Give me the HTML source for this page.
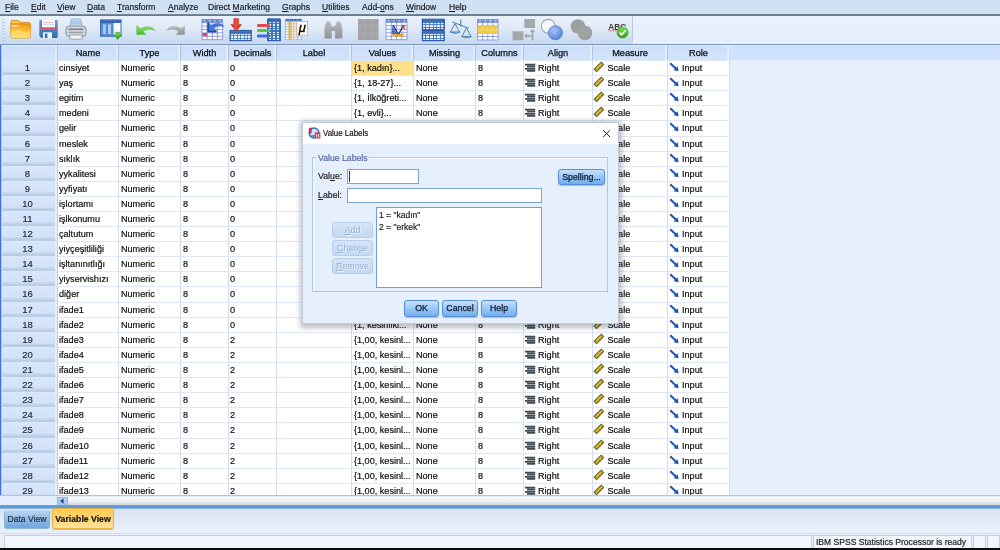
<!DOCTYPE html>
<html lang="tr"><head><meta charset="utf-8"><title>IBM SPSS Statistics Data Editor</title>
<style>
*{box-sizing:border-box;margin:0;padding:0}
html,body{width:1000px;height:550px;overflow:hidden}
body{position:relative;will-change:transform;background:#e7effc;font-family:"Liberation Sans",sans-serif;font-size:9.1px;color:#0c0c0c;-webkit-text-stroke:.18px}
.abs{position:absolute}
.menubar{position:absolute;left:0;top:0;width:1000px;height:14px;background:linear-gradient(#cfe0f5,#cfe1f0)}
.menubar span{position:absolute;top:2px;font-size:8.5px;line-height:10px;color:#1a1a1a;white-space:nowrap}
.menubar u{text-decoration:underline;text-underline-offset:1px}
.menuline{position:absolute;left:0;top:14px;width:1000px;height:2px;background:linear-gradient(#7b8d99,#5f7686)}
.toolbar{position:absolute;left:0;top:16px;width:1000px;height:28px;background:linear-gradient(#e9f1fd,#e5eefb)}
.tbin{position:absolute;left:0;top:0;width:633px;height:28px;background:linear-gradient(#e9f1fc 0%,#dfe9f7 45%,#cfdff3 80%,#c6d9f0 100%);border-right:1px solid #b9c6d8;border-bottom-right-radius:3px}
.tbline{position:absolute;left:0;top:44px;width:1000px;height:1px;background:#7f99bc}
.hdr{position:absolute;left:0;top:45px;width:1000px;height:15px;background:linear-gradient(#d9e7fc 0,#d9e7fc 1px,#cde0fb 2px,#d1e2fb 100%)}
.hc{position:absolute;top:0;height:15px;line-height:17px;padding-left:2px;text-align:center;font-size:9.2px;color:#0a0e14;-webkit-text-stroke:.25px;border-left:1px solid #b1c5e2;border-right:2px solid #e3edfc;background:linear-gradient(#dbe8fc 0,#dbe8fc 1px,#cbdefa 2px,#d2e3fb 100%)}
.grid{position:absolute;left:0;top:60px;width:730px;height:435px;background:#fff;overflow:hidden}
.row{position:absolute;left:0;width:730px}
.rn{position:absolute;left:0;top:0;width:57px;height:100%;line-height:14px;text-align:center;background:linear-gradient(#d8e6fc 0%,#d3e2f9 68%,#bccfe8 86%,#b9cce6 100%);border-top:1px solid #dbe8fb;border-right:2px solid #e6effc;color:#222c3c;font-size:9.5px}
.c{position:absolute;top:0;height:100%;line-height:15.4px;padding-left:2px;white-space:nowrap;overflow:hidden;border-left:1px solid #d3dff0;border-top:1px solid #dfe8f5}
.c1{left:57px;width:61px;padding-left:1px;border-left-color:#b9cbe6}.c2{left:118px;width:62px}.c3{left:180px;width:48px}.c4{left:228px;width:48px;padding-left:1px}.c5{left:276px;width:75px}
.c6{left:351px;width:62px}.c7{left:413px;width:62px}.c8{left:475px;width:48px}.c9{left:523px;width:69px}.c10{left:592px;width:75px}.c11{left:667px;width:63px;border-right:1px solid #d3dff0}
.sel{background:#ffe08a}
i{display:inline-block;vertical-align:top}
.hscroll{position:absolute;left:0;top:495px;width:1000px;height:10px;background:#e4edfb;border-top:1px solid #a9c6ea}
.hsbtn{position:absolute;left:57px;top:1px;width:11px;height:9px;background:linear-gradient(#bcd6f5,#9fc3ee);border:1px solid #8db4e4}
.hsbtn svg{position:absolute;left:0px;top:-1px}
.hstrack{position:absolute;left:68px;top:1px;width:932px;height:9px;background:linear-gradient(#fdfdfe,#eef0f4 45%,#cbd0d9)}
.blueline{position:absolute;left:0;top:505px;width:1000px;height:4px;background:linear-gradient(#6fa5dc,#5b98d4 40%,#5b98d4 70%,#b4cce8)}
.tabbar{position:absolute;left:0;top:509px;width:1000px;height:24px;background:linear-gradient(#d9e2ee,#e3ebf6 50%,#e9f0fb)}
.tab{position:absolute;text-align:center;font-size:8.6px;border-radius:3px;white-space:nowrap}
.tab1{left:4px;top:1px;width:46px;height:19px;line-height:17px;background:linear-gradient(#b9d4f0,#8ebae6 50%,#6ea6de);border:1px solid #8fb4dc;border-top-color:#c3d8ee;color:#1c2a3c}
.tab2{left:52px;top:-1px;width:62px;height:21px;line-height:20px;background:linear-gradient(#ffc94e,#ffd676 50%,#ffe29a);border:1px solid #e9b548;color:#15130c;font-weight:bold;font-size:8.7px;box-shadow:0 1px 1px rgba(120,110,80,.4)}
.statusbar{position:absolute;left:0;top:533px;width:1000px;height:15px;background:#e9f0fb;border-top:1px solid #d3dbe8}
.sb{position:absolute;top:1px;height:14px;border:1px solid #c4cedd;border-bottom:none;background:#f1f5fc;font-size:8.55px;line-height:12px;color:#222;white-space:nowrap}
.sb1{left:4px;width:808px}.sb2{left:813px;width:159px;padding-left:2px}.sb3{left:973px;width:13px}.sb4{left:987px;width:13px}
.blackbar{position:absolute;left:0;top:548px;width:1000px;height:2px;background:#0c0c0c}
.dlgshadow{position:absolute;left:300px;top:121px;width:322px;height:207px;border-radius:3px;background:rgba(50,60,80,.32);filter:blur(2.5px)}
.dlg{position:absolute;left:302px;top:122px;width:317px;height:202px;background:#e6effc;border:1px solid #c2cad6;font-size:8.8px;color:#1c1c1c}
.dtitle{position:absolute;left:0;top:1px;width:315px;height:21px;background:#fff}
.dtt{position:absolute;left:20px;top:5px;font-size:8.8px;line-height:12px;color:#111;transform:scaleX(.9);transform-origin:0 0;white-space:nowrap}
.gb{position:absolute;left:9px;top:35px;width:296px;height:135px;border:1px solid #b4c6dc;box-shadow:inset 1px 1px 0 #f6f9fe}
.gbt{position:absolute;left:14px;top:30px;padding:0 1px;background:#e6effc;color:#5565a5;font-size:8.7px;line-height:12px}
.lb{position:absolute;line-height:12px;color:#222}
.inp{position:absolute;background:#fff;border:1px solid #7fa4d4}
.caret{position:absolute;left:1px;top:1px;width:1px;height:11px;background:#333}
.btn{position:absolute;border:1px solid #5790d6;border-radius:3px;background:linear-gradient(#c6dffa 0%,#9ec9f6 45%,#72aef0 100%);text-align:center;line-height:15.5px;color:#0e1a2e;-webkit-text-stroke:.25px;font-size:8.8px;box-shadow:0 1px 1px rgba(80,110,160,.4)}
.btn.dis{border-color:#b9cfe9;background:linear-gradient(#d6e5f8,#c2d8f2);color:#9ab0d0;-webkit-text-stroke:0;text-shadow:1px 1px 0 #eaf2fd;box-shadow:none}
.list{position:absolute;background:#fff;border:1px solid #6fa0d8;padding:1px 0 0 2px}
.li{line-height:12.2px;color:#1c1c1c;white-space:nowrap;font-size:8.5px}
.ic{position:absolute;top:3px}
.c9 .ic{left:0px;top:2px}.c10 .ic{left:0px;top:0px}.c11 .ic{left:1px;top:1px}
.t9{position:absolute;left:14px}.t10{position:absolute;left:14.5px}.t11{position:absolute;left:14px}
.leftline{position:absolute;left:0;top:45px;width:2px;height:463px;background:linear-gradient(90deg,#3f74c4 0,#3f74c4 1px,#b4cbee 1px,#b4cbee 2px)}
.dlgin{position:absolute;left:0;top:-1px;width:315px;height:202px}
.grip{position:absolute;left:2px;top:3px;width:3px;height:22px;background:repeating-linear-gradient(#b4c4da 0,#b4c4da 1px,transparent 1px,transparent 3px);opacity:.8}

</style></head>
<body>
<div class="menubar">
<span style="left:5px"><u>F</u>ile</span>
<span style="left:31px"><u>E</u>dit</span>
<span style="left:57px"><u>V</u>iew</span>
<span style="left:87px"><u>D</u>ata</span>
<span style="left:117px"><u>T</u>ransform</span>
<span style="left:168px"><u>A</u>nalyze</span>
<span style="left:208px">Direct <u>M</u>arketing</span>
<span style="left:282px"><u>G</u>raphs</span>
<span style="left:322px"><u>U</u>tilities</span>
<span style="left:362px">Add-<u>o</u>ns</span>
<span style="left:406px"><u>W</u>indow</span>
<span style="left:449px"><u>H</u>elp</span>
</div>
<div class="menuline"></div>
<div class="toolbar"><div class="tbin"><div class="grip"></div></div></div>
<div class="tbline"></div>
<svg class="abs" style="left:0;top:16px" width="632" height="28" viewBox="0 16 632 28">
<defs>
<linearGradient id="gFold" x1=".6" y1="0" x2=".4" y2="1"><stop offset="0" stop-color="#ff9e1c"/><stop offset=".5" stop-color="#ffbd3e"/><stop offset="1" stop-color="#ffe26e"/></linearGradient>
<linearGradient id="gBlue" x1="0" y1="0" x2="0" y2="1"><stop offset="0" stop-color="#6298cc"/><stop offset="1" stop-color="#3a6eaa"/></linearGradient>
<linearGradient id="gHdr" x1="0" y1="0" x2="0" y2="1"><stop offset="0" stop-color="#5484c8"/><stop offset="1" stop-color="#2a58a6"/></linearGradient>
<linearGradient id="gGrey" x1="0" y1="0" x2="0" y2="1"><stop offset="0" stop-color="#b9bcc0"/><stop offset="1" stop-color="#8f9397"/></linearGradient>
<linearGradient id="gGreen" x1="0" y1="0" x2="0" y2="1"><stop offset="0" stop-color="#7fe04a"/><stop offset="1" stop-color="#2f9e1c"/></linearGradient>
<linearGradient id="gGreenL" x1="0" y1="0" x2="0" y2="1"><stop offset="0" stop-color="#8fe860"/><stop offset="1" stop-color="#48b82c"/></linearGradient>
<linearGradient id="gRed" x1="0" y1="0" x2="1" y2="0"><stop offset="0" stop-color="#c62a18"/><stop offset=".5" stop-color="#f0523a"/><stop offset="1" stop-color="#b82414"/></linearGradient>
<radialGradient id="gBall" cx=".4" cy=".35" r=".7"><stop offset="0" stop-color="#a9c6f7"/><stop offset="1" stop-color="#4477d6"/></radialGradient>
</defs>
<path d="M10.800 22.300q0-2 2-2h5.400l2 2h8.200q2 0 2 2v4h-19.600z" fill="#f09a1a" stroke="#c9821a" stroke-width=".5"/>
<path d="M12 21.300h5.800l1.600 1.600h-7.400z" fill="#ffd24a"/>
<path d="M11.800 25.300h17.600v4h-17.600z" fill="#fff3d6"/>
<path d="M10.200 27.200q6 .6 10-1.200t10.800-1.200l-.7 11.700q-.1 1.700-1.800 1.700h-15.800q-1.700 0-1.800-1.700z" fill="url(#gFold)" stroke="#d08c1e" stroke-width=".6"/>
<path d="M11 32q7-3.500 11-1.500t8 .5l-.3 5.500q-.1 1.200-1.400 1.200h-15.400q-1.300 0-1.400-1.200z" fill="#ffe678" opacity=".55"/>
<path d="M39.300 21q0-1 1-1h16.400q1 0 1 1v16q0 1-1 1h-15.400l-2-2z" fill="url(#gBlue)"/>
<rect x="42" y="20" width="13" height="8" fill="#f6f8fc"/>
<rect x="40.300" y="27.300" width="16.400" height="2.300" fill="#e2506c"/>
<rect x="43" y="22" width="11" height=".7" fill="#e6a0b0"/>
<rect x="43" y="24.300" width="11" height=".7" fill="#b9d3c8"/>
<rect x="43" y="32.300" width="9" height="5.700" fill="#f1f4fa"/>
<rect x="44.800" y="33.600" width="2.700" height="4.400" fill="#3f70b0"/>
<path d="M69.800 27l1.400-7q.3-1 1.300-1h7q1 0 1.300 1l1.400 7z" fill="#cfe4fa" stroke="#7d98b8" stroke-width=".7"/>
<path d="M71.500 20.500h9l.8 4h-10.600z" fill="#9cc6f0" opacity=".8"/>
<rect x="66" y="26" width="20" height="10.500" rx="3.500" fill="#d6d9de" stroke="#80868f" stroke-width=".9"/>
<rect x="68.500" y="28.400" width="15" height="1.700" fill="#7f858e"/>
<rect x="68.500" y="31.700" width="15" height="1.500" fill="#9aa0a9"/>
<path d="M69.500 35h13l-.8 4.200h-11.400z" fill="#f4f6fa" stroke="#80868f" stroke-width=".7"/>
<rect x="100" y="19.500" width="21.500" height="17.300" fill="#3a70bc"/>
<rect x="100" y="19.500" width="21.500" height="2.800" fill="url(#gHdr)"/>
<rect x="101.300" y="23" width="11.500" height="12.500" fill="#5e96dc"/>
<rect x="102.500" y="24" width="3.600" height="10.500" fill="#a9cdf6" stroke="#3a70bc" stroke-width=".5"/>
<rect x="107.700" y="24" width="3.600" height="10.500" fill="#a9cdf6" stroke="#3a70bc" stroke-width=".5"/>
<rect x="113.500" y="23" width="7" height="12.500" fill="#f7f9fd"/>
<path d="M115.700 32.300h4v2.500h2.200l-4.200 4.600l-4.200-4.600h2.200z" fill="url(#gGreen)" stroke="#2b8a1e" stroke-width=".5"/>
<path d="M136.800 25.500v9h9l-3-3q4.500-3.600 12.300-1.300q-5.500-6.200-14.800-1.400z" fill="url(#gGreenL)" stroke="#4cba34" stroke-width=".5"/>
<path d="M184.500 26v8.500h-8.500l2.800-2.800q-4.500-4-12.300-1.500q5.500-6.500 14.800-1.400z" fill="url(#gGrey)" stroke="#9da1a6" stroke-width=".5"/>
<rect x="202" y="19.2" width="20.6" height="20.5" fill="#fff"/>
<rect x="202" y="19.2" width="20.6" height="3.4" fill="#4a74c4"/>
<rect x="203.29" y="20.22" width="2.57" height="1.36" fill="#b9d0f4"/>
<rect x="208.44" y="20.22" width="2.57" height="1.36" fill="#b9d0f4"/>
<rect x="213.59" y="20.22" width="2.57" height="1.36" fill="#b9d0f4"/>
<rect x="218.74" y="20.22" width="2.57" height="1.36" fill="#b9d0f4"/>
<path d="M202 19.2V39.7M207.15 19.2V39.7M212.3 19.2V39.7M217.45 19.2V39.7M222.6 19.2V39.7M202 22.6H222.6M202 26.02H222.6M202 29.44H222.6M202 32.86H222.6M202 36.28H222.6M202 39.7H222.6" stroke="#8593d6" stroke-width="0.9" fill="none"/>
<rect x="202.400" y="33" width="4.700" height="3.200" fill="#e0456a"/>
<path d="M207.300 22.600h1.800v8.200h7.500v1.800h-9.300z" fill="#1f3f9a"/>
<path d="M208.800 22.600v8.400h7.800l-2.500-2.700q3.800-3.700 10-1.800q-5-6-13.200-1z" fill="#3f7ad8" stroke="#2b58ac" stroke-width=".4"/>
<rect x="230" y="30.4" width="21" height="10.3" fill="#e8f3ff"/>
<rect x="230" y="30.4" width="21" height="3.2" fill="url(#gHdr)"/>
<path d="M230 30.4V40.7M233.5 30.4V40.7M237 30.4V40.7M240.5 30.4V40.7M244 30.4V40.7M247.5 30.4V40.7M251 30.4V40.7M230 33.6H251M230 35.97H251M230 38.33H251M230 40.7H251" stroke="#4378c4" stroke-width="0.8" fill="none" shape-rendering="crispEdges"/>
<rect x="230" y="30.4" width="21" height="10.3" fill="none" stroke="#2a56a4" stroke-width="1"/>
<path d="M233.800 18.600h4.800v5.800h3l-5.400 7l-5.400-7h3z" fill="url(#gRed)" stroke="#a82414" stroke-width=".4"/>
<rect x="268" y="18.9" width="12" height="21.8" fill="#e8f3ff"/>
<rect x="268" y="18.9" width="12" height="2.4" fill="#2b5cb0"/>
<path d="M268 18.9V40.7M272 18.9V40.7M276 18.9V40.7M280 18.9V40.7M268 21.3H280M268 23.72H280M268 26.15H280M268 28.57H280M268 31H280M268 33.42H280M268 35.85H280M268 38.28H280M268 40.7H280" stroke="#3f74c2" stroke-width="1.1" fill="none" shape-rendering="crispEdges"/>
<rect x="268" y="18.9" width="12" height="21.8" fill="none" stroke="#2b5cb0" stroke-width="1"/>
<rect x="257" y="24" width="13" height="3" rx="1.300" fill="#e04a50"/>
<rect x="257" y="28.900" width="13" height="3.100" rx="1.300" fill="#52c83e"/>
<rect x="257" y="34.500" width="13" height="3" rx="1.300" fill="#3f6fd0"/>
<rect x="285.4" y="18.9" width="16.3" height="20.8" fill="#fff"/>
<rect x="285.4" y="18.9" width="16.3" height="2.4" fill="#3f6cbc"/>
<path d="M285.4 18.9V39.7M289.47 18.9V39.7M293.55 18.9V39.7M297.62 18.9V39.7M301.7 18.9V39.7M285.4 21.3H301.7M285.4 23.93H301.7M285.4 26.56H301.7M285.4 29.19H301.7M285.4 31.81H301.7M285.4 34.44H301.7M285.4 37.07H301.7M285.4 39.7H301.7" stroke="#8fa6dc" stroke-width="0.8" fill="none"/>
<rect x="288.300" y="21.600" width="3.600" height="18" fill="#dcb84e" opacity=".85"/>
<rect x="293" y="21.600" width="3.200" height="18" fill="#f0dc9a" opacity=".55"/>
<rect x="296.600" y="21.400" width="11" height="13.800" fill="#fffaf5" stroke="#eaa27e" stroke-width=".8"/>
<text x="302.200" y="32" font-family="Liberation Sans,sans-serif" font-size="13" font-style="italic" text-anchor="middle" fill="#000" stroke="#000" stroke-width=".35">μ</text>
<path d="M326.500 21.500h4v2l1.200 2v13h-7.200v-11z M340.300 21.500h-4v2l-1.200 2v13h7.200v-11z" fill="url(#gGrey)"/>
<rect x="331" y="26.500" width="5" height="4.500" fill="#a3a6aa"/>
<rect x="358" y="19" width="20.500" height="21" fill="#a3a4a5"/>
<path d="M358 26h20.500M358 33h20.500M365 19v21M372 19v21" stroke="#adaeaf" stroke-width=".8"/>
<rect x="386" y="18.9" width="21" height="20.8" fill="#fff"/>
<rect x="386" y="18.9" width="21" height="3.4" fill="#4a74c4"/>
<rect x="387.31" y="19.92" width="2.62" height="1.36" fill="#b9d0f4"/>
<rect x="392.56" y="19.92" width="2.62" height="1.36" fill="#b9d0f4"/>
<rect x="397.81" y="19.92" width="2.62" height="1.36" fill="#b9d0f4"/>
<rect x="403.06" y="19.92" width="2.62" height="1.36" fill="#b9d0f4"/>
<path d="M386 18.9V39.7M391.25 18.9V39.7M396.5 18.9V39.7M401.75 18.9V39.7M407 18.9V39.7M386 22.3H407M386 25.78H407M386 29.26H407M386 32.74H407M386 36.22H407M386 39.7H407" stroke="#8593d6" stroke-width="0.9" fill="none"/>
<path d="M392.500 25.500l4.800 8.500h-5.800z" fill="#4a70d0"/>
<path d="M393 25l5.500 9.500M403.500 25l-5 9.500" stroke="#26348a" stroke-width="1.300"/>
<path d="M391.500 34h13l-2 2.400h-9z" fill="#e8a825"/>
<path d="M402.300 26.500l2.600-2l-.3 6z" fill="#d8503a"/>
<rect x="422.3" y="19.2" width="21.7" height="10.6" fill="#e8f3ff"/>
<rect x="422.3" y="19.2" width="21.7" height="3.3" fill="url(#gHdr)"/>
<path d="M422.3 19.2V29.8M425.92 19.2V29.8M429.53 19.2V29.8M433.15 19.2V29.8M436.77 19.2V29.8M440.38 19.2V29.8M444 19.2V29.8M422.3 22.5H444M422.3 24.93H444M422.3 27.37H444M422.3 29.8H444" stroke="#4378c4" stroke-width="0.9" fill="none" shape-rendering="crispEdges"/>
<rect x="422.3" y="31" width="21.7" height="9.7" fill="#e8f3ff"/>
<rect x="422.3" y="31" width="21.7" height="2.5" fill="url(#gHdr)"/>
<path d="M422.3 31V40.7M425.92 31V40.7M429.53 31V40.7M433.15 31V40.7M436.77 31V40.7M440.38 31V40.7M444 31V40.7M422.3 33.5H444M422.3 35.9H444M422.3 38.3H444M422.3 40.7H444" stroke="#4378c4" stroke-width="0.9" fill="none" shape-rendering="crispEdges"/>
<rect x="422.300" y="19.200" width="21.700" height="21.500" fill="none" stroke="#2a56a4" stroke-width="1"/><rect x="422.300" y="29.500" width="21.700" height="1.800" fill="#2a56a4"/>
<path d="M452.500 22l16 6.200" stroke="#5b87b5" stroke-width="1.200"/>
<path d="M460.800 19.500v7" stroke="#5b87b5" stroke-width="1.200"/>
<path d="M455 23.500l-4.600 8.700h9.200z" fill="none" stroke="#5b87b5" stroke-width="1"/>
<path d="M450 32h10q-5 3-10 0z" fill="#7eaad6" stroke="#4d7cab" stroke-width=".6"/>
<path d="M466.500 28l-4.600 8.700h9.200z" fill="none" stroke="#5b87b5" stroke-width="1"/>
<path d="M461.500 36.500h10q-5 3-10 0z" fill="#7eaad6" stroke="#4d7cab" stroke-width=".6"/>
<rect x="477.5" y="19.2" width="20.5" height="20.8" fill="#fff"/>
<rect x="477.5" y="19.2" width="20.5" height="3.3" fill="#5a80c8"/>
<rect x="478.78" y="20.19" width="2.56" height="1.32" fill="#c4d6f4"/>
<rect x="483.91" y="20.19" width="2.56" height="1.32" fill="#c4d6f4"/>
<rect x="489.03" y="20.19" width="2.56" height="1.32" fill="#c4d6f4"/>
<rect x="494.16" y="20.19" width="2.56" height="1.32" fill="#c4d6f4"/>
<path d="M477.5 19.2V40M482.62 19.2V40M487.75 19.2V40M492.88 19.2V40M498 19.2V40M477.5 22.5H498M477.5 26H498M477.5 29.5H498M477.5 33H498M477.5 36.5H498M477.5 40H498" stroke="#8593d6" stroke-width="0.9" fill="none"/>
<rect x="477.500" y="26" width="20.500" height="7.600" fill="#f0c636" opacity=".92"/>
<path d="M482.600 26v7.600M487.700 26v7.600M492.800 26v7.600M477.500 29.800h20.500" stroke="#f8e28e" stroke-width=".7"/>
<rect x="524.300" y="19" width="10.700" height="9" fill="#a6a7a8"/>
<rect x="512.600" y="31.300" width="10.700" height="9" fill="#a6a7a8"/>
<path d="M525 35.800h6M532.500 30v10.500" stroke="#a6a7a8" stroke-width="1.800"/>
<path d="M524 35.800l3-2.600v5.200zM532.500 29l-2.600 3h5.200z" fill="#a6a7a8"/>
<circle cx="548.300" cy="26.300" r="7" fill="#f4f7fc" stroke="#b0b4ba" stroke-width="1.200"/>
<circle cx="555.400" cy="32.800" r="7.100" fill="url(#gBall)" stroke="#4a78d0" stroke-width=".8" opacity=".92"/>
<circle cx="548.300" cy="26.300" r="7" fill="none" stroke="#9aa0aa" stroke-width=".9" opacity=".55"/>
<circle cx="578" cy="26.500" r="7.300" fill="#9d9e9f"/>
<circle cx="585" cy="33" r="7.300" fill="#a1a2a3"/>
<text x="608.300" y="29.500" font-family="Liberation Sans,sans-serif" font-size="9.300" font-weight="bold" fill="#3a3a3a" textLength="18" lengthAdjust="spacingAndGlyphs">ABC</text>
<path d="M608.500 30.800h9" stroke="#e03030" stroke-width=".8" stroke-dasharray="1 .6"/>
<circle cx="622.500" cy="32.500" r="5.600" fill="url(#gGreen)" stroke="#2b8a1e" stroke-width=".5"/>
<path d="M619.500 32.500l2.200 2.300l3.900-4.400" fill="none" stroke="#fff" stroke-width="1.600"/>
</svg>
<svg width="0" height="0" style="position:absolute"><defs>
<symbol id="iAl" viewBox="0 0 12 10"><path d="M1 1.600h10.200M3 3.700h8.200M1 5.800h10.200M3 7.900h8.200" stroke="#3f4852" stroke-width="1.750"/></symbol>
<symbol id="iSc" viewBox="0 0 12 11"><path d="M1.200 8.200L8.200 1.200L10.600 3.600L3.600 10.600z" fill="#e0c040" stroke="#6a5c18" stroke-width="1.100"/><path d="M4 7.600l1.100 1.100M5.900 5.700l1.100 1.100M7.800 3.800l1.100 1.100" stroke="#5a4e14" stroke-width=".8"/></symbol>
<symbol id="iIn" viewBox="0 0 11 10"><path d="M1.200 1.200L7.400 7" stroke="#1a55b8" stroke-width="2"/><path d="M9.600 9.200L4.600 8.200L8.600 4.300z" fill="#1a55b8"/></symbol>
</defs></svg>
<div class="hdr">
<div class="hc" style="left:0px;width:57px"></div>
<div class="hc" style="left:57px;width:61px">Name</div>
<div class="hc" style="left:118px;width:62px">Type</div>
<div class="hc" style="left:180px;width:48px">Width</div>
<div class="hc" style="left:228px;width:48px">Decimals</div>
<div class="hc" style="left:276px;width:75px">Label</div>
<div class="hc" style="left:351px;width:62px">Values</div>
<div class="hc" style="left:413px;width:62px">Missing</div>
<div class="hc" style="left:475px;width:48px">Columns</div>
<div class="hc" style="left:523px;width:69px">Align</div>
<div class="hc" style="left:592px;width:75px">Measure</div>
<div class="hc" style="left:667px;width:62px">Role</div>
</div>
<div class="grid">
<div class="row" style="top:0px;height:15px"><div class="rn">1</div><div class="c c1">cinsiyet</div><div class="c c2">Numeric</div><div class="c c3">8</div><div class="c c4">0</div><div class="c c5"></div><div class="c c6 sel">{1, kadın}...</div><div class="c c7">None</div><div class="c c8">8</div><div class="c c9"><svg class="ic" width="12" height="10"><use href="#iAl"/></svg><span class="t9">Right</span></div><div class="c c10"><svg class="ic" width="12" height="11"><use href="#iSc"/></svg><span class="t10">Scale</span></div><div class="c c11"><svg class="ic" width="11" height="10"><use href="#iIn"/></svg><span class="t11">Input</span></div></div>
<div class="row" style="top:15px;height:15px"><div class="rn">2</div><div class="c c1">yaş</div><div class="c c2">Numeric</div><div class="c c3">8</div><div class="c c4">0</div><div class="c c5"></div><div class="c c6">{1, 18-27}...</div><div class="c c7">None</div><div class="c c8">8</div><div class="c c9"><svg class="ic" width="12" height="10"><use href="#iAl"/></svg><span class="t9">Right</span></div><div class="c c10"><svg class="ic" width="12" height="11"><use href="#iSc"/></svg><span class="t10">Scale</span></div><div class="c c11"><svg class="ic" width="11" height="10"><use href="#iIn"/></svg><span class="t11">Input</span></div></div>
<div class="row" style="top:30px;height:15px"><div class="rn">3</div><div class="c c1">egitim</div><div class="c c2">Numeric</div><div class="c c3">8</div><div class="c c4">0</div><div class="c c5"></div><div class="c c6">{1, İlköğreti...</div><div class="c c7">None</div><div class="c c8">8</div><div class="c c9"><svg class="ic" width="12" height="10"><use href="#iAl"/></svg><span class="t9">Right</span></div><div class="c c10"><svg class="ic" width="12" height="11"><use href="#iSc"/></svg><span class="t10">Scale</span></div><div class="c c11"><svg class="ic" width="11" height="10"><use href="#iIn"/></svg><span class="t11">Input</span></div></div>
<div class="row" style="top:45px;height:15px"><div class="rn">4</div><div class="c c1">medeni</div><div class="c c2">Numeric</div><div class="c c3">8</div><div class="c c4">0</div><div class="c c5"></div><div class="c c6">{1, evli}...</div><div class="c c7">None</div><div class="c c8">8</div><div class="c c9"><svg class="ic" width="12" height="10"><use href="#iAl"/></svg><span class="t9">Right</span></div><div class="c c10"><svg class="ic" width="12" height="11"><use href="#iSc"/></svg><span class="t10">Scale</span></div><div class="c c11"><svg class="ic" width="11" height="10"><use href="#iIn"/></svg><span class="t11">Input</span></div></div>
<div class="row" style="top:60px;height:16px"><div class="rn">5</div><div class="c c1">gelir</div><div class="c c2">Numeric</div><div class="c c3">8</div><div class="c c4">0</div><div class="c c5"></div><div class="c c6"></div><div class="c c7">None</div><div class="c c8">8</div><div class="c c9"><svg class="ic" width="12" height="10"><use href="#iAl"/></svg><span class="t9">Right</span></div><div class="c c10"><svg class="ic" width="12" height="11"><use href="#iSc"/></svg><span class="t10">Scale</span></div><div class="c c11"><svg class="ic" width="11" height="10"><use href="#iIn"/></svg><span class="t11">Input</span></div></div>
<div class="row" style="top:76px;height:15px"><div class="rn">6</div><div class="c c1">meslek</div><div class="c c2">Numeric</div><div class="c c3">8</div><div class="c c4">0</div><div class="c c5"></div><div class="c c6"></div><div class="c c7">None</div><div class="c c8">8</div><div class="c c9"><svg class="ic" width="12" height="10"><use href="#iAl"/></svg><span class="t9">Right</span></div><div class="c c10"><svg class="ic" width="12" height="11"><use href="#iSc"/></svg><span class="t10">Scale</span></div><div class="c c11"><svg class="ic" width="11" height="10"><use href="#iIn"/></svg><span class="t11">Input</span></div></div>
<div class="row" style="top:91px;height:15px"><div class="rn">7</div><div class="c c1">sıklık</div><div class="c c2">Numeric</div><div class="c c3">8</div><div class="c c4">0</div><div class="c c5"></div><div class="c c6"></div><div class="c c7">None</div><div class="c c8">8</div><div class="c c9"><svg class="ic" width="12" height="10"><use href="#iAl"/></svg><span class="t9">Right</span></div><div class="c c10"><svg class="ic" width="12" height="11"><use href="#iSc"/></svg><span class="t10">Scale</span></div><div class="c c11"><svg class="ic" width="11" height="10"><use href="#iIn"/></svg><span class="t11">Input</span></div></div>
<div class="row" style="top:106px;height:15px"><div class="rn">8</div><div class="c c1">yykalitesi</div><div class="c c2">Numeric</div><div class="c c3">8</div><div class="c c4">0</div><div class="c c5"></div><div class="c c6"></div><div class="c c7">None</div><div class="c c8">8</div><div class="c c9"><svg class="ic" width="12" height="10"><use href="#iAl"/></svg><span class="t9">Right</span></div><div class="c c10"><svg class="ic" width="12" height="11"><use href="#iSc"/></svg><span class="t10">Scale</span></div><div class="c c11"><svg class="ic" width="11" height="10"><use href="#iIn"/></svg><span class="t11">Input</span></div></div>
<div class="row" style="top:121px;height:15px"><div class="rn">9</div><div class="c c1">yyfiyatı</div><div class="c c2">Numeric</div><div class="c c3">8</div><div class="c c4">0</div><div class="c c5"></div><div class="c c6"></div><div class="c c7">None</div><div class="c c8">8</div><div class="c c9"><svg class="ic" width="12" height="10"><use href="#iAl"/></svg><span class="t9">Right</span></div><div class="c c10"><svg class="ic" width="12" height="11"><use href="#iSc"/></svg><span class="t10">Scale</span></div><div class="c c11"><svg class="ic" width="11" height="10"><use href="#iIn"/></svg><span class="t11">Input</span></div></div>
<div class="row" style="top:136px;height:15px"><div class="rn">10</div><div class="c c1">işlortamı</div><div class="c c2">Numeric</div><div class="c c3">8</div><div class="c c4">0</div><div class="c c5"></div><div class="c c6"></div><div class="c c7">None</div><div class="c c8">8</div><div class="c c9"><svg class="ic" width="12" height="10"><use href="#iAl"/></svg><span class="t9">Right</span></div><div class="c c10"><svg class="ic" width="12" height="11"><use href="#iSc"/></svg><span class="t10">Scale</span></div><div class="c c11"><svg class="ic" width="11" height="10"><use href="#iIn"/></svg><span class="t11">Input</span></div></div>
<div class="row" style="top:151px;height:15px"><div class="rn">11</div><div class="c c1">işlkonumu</div><div class="c c2">Numeric</div><div class="c c3">8</div><div class="c c4">0</div><div class="c c5"></div><div class="c c6"></div><div class="c c7">None</div><div class="c c8">8</div><div class="c c9"><svg class="ic" width="12" height="10"><use href="#iAl"/></svg><span class="t9">Right</span></div><div class="c c10"><svg class="ic" width="12" height="11"><use href="#iSc"/></svg><span class="t10">Scale</span></div><div class="c c11"><svg class="ic" width="11" height="10"><use href="#iIn"/></svg><span class="t11">Input</span></div></div>
<div class="row" style="top:166px;height:15px"><div class="rn">12</div><div class="c c1">çaltutum</div><div class="c c2">Numeric</div><div class="c c3">8</div><div class="c c4">0</div><div class="c c5"></div><div class="c c6"></div><div class="c c7">None</div><div class="c c8">8</div><div class="c c9"><svg class="ic" width="12" height="10"><use href="#iAl"/></svg><span class="t9">Right</span></div><div class="c c10"><svg class="ic" width="12" height="11"><use href="#iSc"/></svg><span class="t10">Scale</span></div><div class="c c11"><svg class="ic" width="11" height="10"><use href="#iIn"/></svg><span class="t11">Input</span></div></div>
<div class="row" style="top:181px;height:15px"><div class="rn">13</div><div class="c c1">yiyçeşitliliği</div><div class="c c2">Numeric</div><div class="c c3">8</div><div class="c c4">0</div><div class="c c5"></div><div class="c c6"></div><div class="c c7">None</div><div class="c c8">8</div><div class="c c9"><svg class="ic" width="12" height="10"><use href="#iAl"/></svg><span class="t9">Right</span></div><div class="c c10"><svg class="ic" width="12" height="11"><use href="#iSc"/></svg><span class="t10">Scale</span></div><div class="c c11"><svg class="ic" width="11" height="10"><use href="#iIn"/></svg><span class="t11">Input</span></div></div>
<div class="row" style="top:196px;height:15px"><div class="rn">14</div><div class="c c1">işltanınıtlığı</div><div class="c c2">Numeric</div><div class="c c3">8</div><div class="c c4">0</div><div class="c c5"></div><div class="c c6"></div><div class="c c7">None</div><div class="c c8">8</div><div class="c c9"><svg class="ic" width="12" height="10"><use href="#iAl"/></svg><span class="t9">Right</span></div><div class="c c10"><svg class="ic" width="12" height="11"><use href="#iSc"/></svg><span class="t10">Scale</span></div><div class="c c11"><svg class="ic" width="11" height="10"><use href="#iIn"/></svg><span class="t11">Input</span></div></div>
<div class="row" style="top:211px;height:15px"><div class="rn">15</div><div class="c c1">yiyservishızı</div><div class="c c2">Numeric</div><div class="c c3">8</div><div class="c c4">0</div><div class="c c5"></div><div class="c c6"></div><div class="c c7">None</div><div class="c c8">8</div><div class="c c9"><svg class="ic" width="12" height="10"><use href="#iAl"/></svg><span class="t9">Right</span></div><div class="c c10"><svg class="ic" width="12" height="11"><use href="#iSc"/></svg><span class="t10">Scale</span></div><div class="c c11"><svg class="ic" width="11" height="10"><use href="#iIn"/></svg><span class="t11">Input</span></div></div>
<div class="row" style="top:226px;height:16px"><div class="rn">16</div><div class="c c1">diğer</div><div class="c c2">Numeric</div><div class="c c3">8</div><div class="c c4">0</div><div class="c c5"></div><div class="c c6"></div><div class="c c7">None</div><div class="c c8">8</div><div class="c c9"><svg class="ic" width="12" height="10"><use href="#iAl"/></svg><span class="t9">Right</span></div><div class="c c10"><svg class="ic" width="12" height="11"><use href="#iSc"/></svg><span class="t10">Scale</span></div><div class="c c11"><svg class="ic" width="11" height="10"><use href="#iIn"/></svg><span class="t11">Input</span></div></div>
<div class="row" style="top:242px;height:15px"><div class="rn">17</div><div class="c c1">ifade1</div><div class="c c2">Numeric</div><div class="c c3">8</div><div class="c c4">0</div><div class="c c5"></div><div class="c c6"></div><div class="c c7">None</div><div class="c c8">8</div><div class="c c9"><svg class="ic" width="12" height="10"><use href="#iAl"/></svg><span class="t9">Right</span></div><div class="c c10"><svg class="ic" width="12" height="11"><use href="#iSc"/></svg><span class="t10">Scale</span></div><div class="c c11"><svg class="ic" width="11" height="10"><use href="#iIn"/></svg><span class="t11">Input</span></div></div>
<div class="row" style="top:257px;height:15px"><div class="rn">18</div><div class="c c1">ifade2</div><div class="c c2">Numeric</div><div class="c c3">8</div><div class="c c4">0</div><div class="c c5"></div><div class="c c6">{1, kesinlikl...</div><div class="c c7">None</div><div class="c c8">8</div><div class="c c9"><svg class="ic" width="12" height="10"><use href="#iAl"/></svg><span class="t9">Right</span></div><div class="c c10"><svg class="ic" width="12" height="11"><use href="#iSc"/></svg><span class="t10">Scale</span></div><div class="c c11"><svg class="ic" width="11" height="10"><use href="#iIn"/></svg><span class="t11">Input</span></div></div>
<div class="row" style="top:272px;height:15px"><div class="rn">19</div><div class="c c1">ifade3</div><div class="c c2">Numeric</div><div class="c c3">8</div><div class="c c4">2</div><div class="c c5"></div><div class="c c6">{1,00, kesinl...</div><div class="c c7">None</div><div class="c c8">8</div><div class="c c9"><svg class="ic" width="12" height="10"><use href="#iAl"/></svg><span class="t9">Right</span></div><div class="c c10"><svg class="ic" width="12" height="11"><use href="#iSc"/></svg><span class="t10">Scale</span></div><div class="c c11"><svg class="ic" width="11" height="10"><use href="#iIn"/></svg><span class="t11">Input</span></div></div>
<div class="row" style="top:287px;height:15px"><div class="rn">20</div><div class="c c1">ifade4</div><div class="c c2">Numeric</div><div class="c c3">8</div><div class="c c4">2</div><div class="c c5"></div><div class="c c6">{1,00, kesinl...</div><div class="c c7">None</div><div class="c c8">8</div><div class="c c9"><svg class="ic" width="12" height="10"><use href="#iAl"/></svg><span class="t9">Right</span></div><div class="c c10"><svg class="ic" width="12" height="11"><use href="#iSc"/></svg><span class="t10">Scale</span></div><div class="c c11"><svg class="ic" width="11" height="10"><use href="#iIn"/></svg><span class="t11">Input</span></div></div>
<div class="row" style="top:302px;height:15px"><div class="rn">21</div><div class="c c1">ifade5</div><div class="c c2">Numeric</div><div class="c c3">8</div><div class="c c4">2</div><div class="c c5"></div><div class="c c6">{1,00, kesinl...</div><div class="c c7">None</div><div class="c c8">8</div><div class="c c9"><svg class="ic" width="12" height="10"><use href="#iAl"/></svg><span class="t9">Right</span></div><div class="c c10"><svg class="ic" width="12" height="11"><use href="#iSc"/></svg><span class="t10">Scale</span></div><div class="c c11"><svg class="ic" width="11" height="10"><use href="#iIn"/></svg><span class="t11">Input</span></div></div>
<div class="row" style="top:317px;height:15px"><div class="rn">22</div><div class="c c1">ifade6</div><div class="c c2">Numeric</div><div class="c c3">8</div><div class="c c4">2</div><div class="c c5"></div><div class="c c6">{1,00, kesinl...</div><div class="c c7">None</div><div class="c c8">8</div><div class="c c9"><svg class="ic" width="12" height="10"><use href="#iAl"/></svg><span class="t9">Right</span></div><div class="c c10"><svg class="ic" width="12" height="11"><use href="#iSc"/></svg><span class="t10">Scale</span></div><div class="c c11"><svg class="ic" width="11" height="10"><use href="#iIn"/></svg><span class="t11">Input</span></div></div>
<div class="row" style="top:332px;height:15px"><div class="rn">23</div><div class="c c1">ifade7</div><div class="c c2">Numeric</div><div class="c c3">8</div><div class="c c4">2</div><div class="c c5"></div><div class="c c6">{1,00, kesinl...</div><div class="c c7">None</div><div class="c c8">8</div><div class="c c9"><svg class="ic" width="12" height="10"><use href="#iAl"/></svg><span class="t9">Right</span></div><div class="c c10"><svg class="ic" width="12" height="11"><use href="#iSc"/></svg><span class="t10">Scale</span></div><div class="c c11"><svg class="ic" width="11" height="10"><use href="#iIn"/></svg><span class="t11">Input</span></div></div>
<div class="row" style="top:347px;height:15px"><div class="rn">24</div><div class="c c1">ifade8</div><div class="c c2">Numeric</div><div class="c c3">8</div><div class="c c4">2</div><div class="c c5"></div><div class="c c6">{1,00, kesinl...</div><div class="c c7">None</div><div class="c c8">8</div><div class="c c9"><svg class="ic" width="12" height="10"><use href="#iAl"/></svg><span class="t9">Right</span></div><div class="c c10"><svg class="ic" width="12" height="11"><use href="#iSc"/></svg><span class="t10">Scale</span></div><div class="c c11"><svg class="ic" width="11" height="10"><use href="#iIn"/></svg><span class="t11">Input</span></div></div>
<div class="row" style="top:362px;height:16px"><div class="rn">25</div><div class="c c1">ifade9</div><div class="c c2">Numeric</div><div class="c c3">8</div><div class="c c4">2</div><div class="c c5"></div><div class="c c6">{1,00, kesinl...</div><div class="c c7">None</div><div class="c c8">8</div><div class="c c9"><svg class="ic" width="12" height="10"><use href="#iAl"/></svg><span class="t9">Right</span></div><div class="c c10"><svg class="ic" width="12" height="11"><use href="#iSc"/></svg><span class="t10">Scale</span></div><div class="c c11"><svg class="ic" width="11" height="10"><use href="#iIn"/></svg><span class="t11">Input</span></div></div>
<div class="row" style="top:378px;height:15px"><div class="rn">26</div><div class="c c1">ifade10</div><div class="c c2">Numeric</div><div class="c c3">8</div><div class="c c4">2</div><div class="c c5"></div><div class="c c6">{1,00, kesinl...</div><div class="c c7">None</div><div class="c c8">8</div><div class="c c9"><svg class="ic" width="12" height="10"><use href="#iAl"/></svg><span class="t9">Right</span></div><div class="c c10"><svg class="ic" width="12" height="11"><use href="#iSc"/></svg><span class="t10">Scale</span></div><div class="c c11"><svg class="ic" width="11" height="10"><use href="#iIn"/></svg><span class="t11">Input</span></div></div>
<div class="row" style="top:393px;height:15px"><div class="rn">27</div><div class="c c1">ifade11</div><div class="c c2">Numeric</div><div class="c c3">8</div><div class="c c4">2</div><div class="c c5"></div><div class="c c6">{1,00, kesinl...</div><div class="c c7">None</div><div class="c c8">8</div><div class="c c9"><svg class="ic" width="12" height="10"><use href="#iAl"/></svg><span class="t9">Right</span></div><div class="c c10"><svg class="ic" width="12" height="11"><use href="#iSc"/></svg><span class="t10">Scale</span></div><div class="c c11"><svg class="ic" width="11" height="10"><use href="#iIn"/></svg><span class="t11">Input</span></div></div>
<div class="row" style="top:408px;height:15px"><div class="rn">28</div><div class="c c1">ifade12</div><div class="c c2">Numeric</div><div class="c c3">8</div><div class="c c4">2</div><div class="c c5"></div><div class="c c6">{1,00, kesinl...</div><div class="c c7">None</div><div class="c c8">8</div><div class="c c9"><svg class="ic" width="12" height="10"><use href="#iAl"/></svg><span class="t9">Right</span></div><div class="c c10"><svg class="ic" width="12" height="11"><use href="#iSc"/></svg><span class="t10">Scale</span></div><div class="c c11"><svg class="ic" width="11" height="10"><use href="#iIn"/></svg><span class="t11">Input</span></div></div>
<div class="row" style="top:423px;height:15px"><div class="rn">29</div><div class="c c1">ifade13</div><div class="c c2">Numeric</div><div class="c c3">8</div><div class="c c4">2</div><div class="c c5"></div><div class="c c6">{1,00, kesinl...</div><div class="c c7">None</div><div class="c c8">8</div><div class="c c9"><svg class="ic" width="12" height="10"><use href="#iAl"/></svg><span class="t9">Right</span></div><div class="c c10"><svg class="ic" width="12" height="11"><use href="#iSc"/></svg><span class="t10">Scale</span></div><div class="c c11"><svg class="ic" width="11" height="10"><use href="#iIn"/></svg><span class="t11">Input</span></div></div>
</div>
<!-- bottom area -->
<div class="leftline"></div>
<div class="hscroll"><div class="hsbtn"><svg width="8" height="8" viewBox="0 0 8 8"><path d="M5.500 1.300 L2.300 4 L5.500 6.700z" fill="#1d3d6e"/></svg></div><div class="hstrack"></div></div>
<div class="blueline"></div>
<div class="tabbar">
<div class="tab tab1">Data View</div>
<div class="tab tab2">Variable View</div>
</div>
<div class="statusbar">
<div class="sb sb1"></div>
<div class="sb sb2">IBM SPSS Statistics Processor is ready</div>
<div class="sb sb3"></div>
<div class="sb sb4"></div>
</div>
<div class="blackbar"></div>

<!-- dialog -->
<div class="dlgshadow"></div>
<div class="dlg"><div class="dlgin">
<div class="dtitle"></div>
<svg class="abs" style="left:5px;top:5px" width="13" height="12" viewBox="0 0 13 12">
<circle cx="6" cy="6" r="4.900" fill="#cfe2f6" stroke="#2f74bc" stroke-width="1.500"/>
<path d="M3.500 8.500q2.500 1.500 4.500-.5" stroke="#1f4f9a" stroke-width="1.200" fill="none"/>
<path d="M2.400 0.200l2.300 2.600h-1.200v3.600h-2.200v-3.600h-1.200z" fill="#d8203c"/>
<rect x="6.800" y="5.300" width="5.600" height="6.200" fill="#e0405a"/>
<path d="M8 10.300v-3h1.100v3zM10 10.300v-3h1.100v3z" fill="#f6c9d2"/>
</svg>
<span class="dtt">Value Labels</span>
<svg class="abs" style="left:299px;top:7px" width="9" height="9" viewBox="0 0 9 9"><path d="M1.200 1.200L8 8M8 1.200L1.200 8" stroke="#222" stroke-width="1"/></svg>
<div class="gb"></div>
<div class="gbt">Value Labels</div>
<div class="lb" style="left:15px;top:48px">Val<u>u</u>e:</div>
<div class="inp" style="left:44px;top:47px;width:72px;height:15px"><div class="caret"></div></div>
<div class="lb" style="left:15px;top:67px"><u>L</u>abel:</div>
<div class="inp" style="left:44px;top:66px;width:195px;height:15px"></div>
<div class="btn" style="left:255px;top:47px;width:47px;height:16px">Spelling...</div>
<div class="btn dis" style="left:29px;top:100px;width:41px;height:16px"><u>A</u>dd</div>
<div class="btn dis" style="left:29px;top:118px;width:41px;height:16px"><u>C</u>hange</div>
<div class="btn dis" style="left:29px;top:136px;width:41px;height:16px"><u>R</u>emove</div>
<div class="list" style="left:73px;top:85px;width:166px;height:81px">
<div class="li">1 = "kadın"</div>
<div class="li">2 = "erkek"</div>
</div>
<div class="btn" style="left:101px;top:178px;width:35px;height:17px">OK</div>
<div class="btn" style="left:139px;top:178px;width:36px;height:17px">Cancel</div>
<div class="btn" style="left:178px;top:178px;width:36px;height:17px">Help</div>
</div></div>
</body></html>
